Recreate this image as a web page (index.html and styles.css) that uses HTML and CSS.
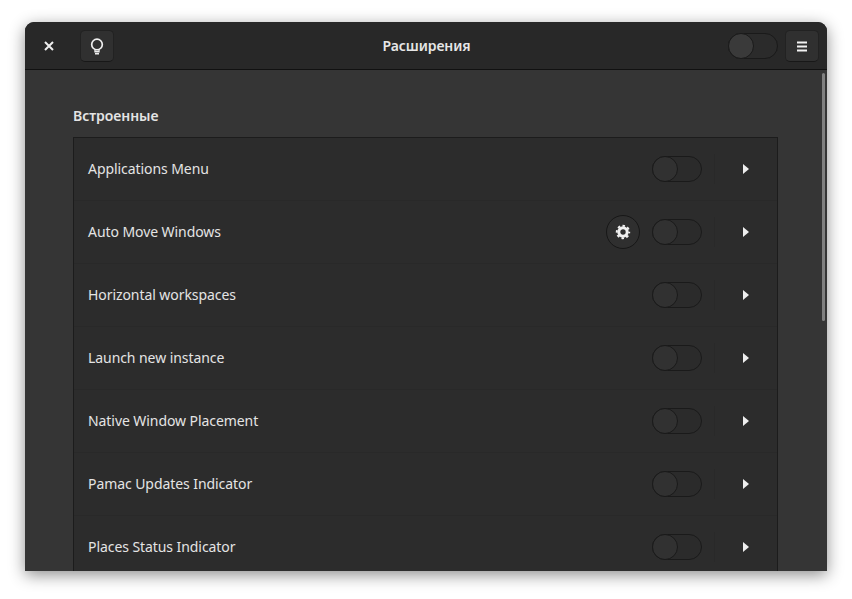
FILE: index.html
```html
<!DOCTYPE html>
<html lang="ru">
<head>
<meta charset="utf-8">
<title>Расширения</title>
<link rel="stylesheet" href="styles.css">
</head>
<body>
<div class="window">
  <header class="titlebar">
    <button class="close" aria-label="Закрыть">
      <svg width="10" height="10" viewBox="0 0 10 10"><path d="M1 1l8 8M9 1l-8 8" stroke="#eee" stroke-width="2" fill="none"/></svg>
    </button>
    <button class="tool" aria-label="Совет">
      <svg width="14" height="17" viewBox="0 0 14 17"><circle cx="7" cy="6.500" r="5.300" stroke="#eee" stroke-width="1.700" fill="none"/><path d="M5 11.500v2.200h4v-2.200" stroke="#eee" stroke-width="1.400" fill="none"/><path d="M5 15.800h4" stroke="#eee" stroke-width="1.600"/></svg>
    </button>
    <h1 class="title">Расширения</h1>
    <span class="switch"><span class="knob"></span></span>
    <button class="tool" aria-label="Меню">
      <svg width="10" height="11" viewBox="0 0 10 11"><path d="M0 1.500h10M0 5.500h10M0 9.500h10" stroke="#f2f2f2" stroke-width="2"/></svg>
    </button>
  </header>
  <main class="content">
    <div class="scrollbar"></div>
    <h2 class="section">Встроенные</h2>
    <div class="list">
      <div class="row"><span class="name">Applications Menu</span><span class="switch"><span class="knob"></span></span><span class="more"><i class="arrow"></i></span></div>
      <div class="row"><span class="name">Auto Move Windows</span>
        <button class="gear" aria-label="Настройки"><svg width="16" height="16" viewBox="0 0 16 16"><circle cx="8" cy="8" r="4.200" fill="none" stroke="#f0f0f0" stroke-width="3"/><circle cx="8" cy="8" r="6.200" fill="none" stroke="#f0f0f0" stroke-width="2" stroke-dasharray="2.500 2.370" stroke-dashoffset="1.250"/></svg></button>
        <span class="switch"><span class="knob"></span></span><span class="more"><i class="arrow"></i></span></div>
      <div class="row"><span class="name">Horizontal workspaces</span><span class="switch"><span class="knob"></span></span><span class="more"><i class="arrow"></i></span></div>
      <div class="row"><span class="name">Launch new instance</span><span class="switch"><span class="knob"></span></span><span class="more"><i class="arrow"></i></span></div>
      <div class="row"><span class="name">Native Window Placement</span><span class="switch"><span class="knob"></span></span><span class="more"><i class="arrow"></i></span></div>
      <div class="row"><span class="name">Pamac Updates Indicator</span><span class="switch"><span class="knob"></span></span><span class="more"><i class="arrow"></i></span></div>
      <div class="row"><span class="name">Places Status Indicator</span><span class="switch"><span class="knob"></span></span><span class="more"><i class="arrow"></i></span></div>
    </div>
  </main>
</div>
</body>
</html>
```

FILE: styles.css
```css
* { box-sizing: border-box; }
html, body { margin: 0; height: 100%; overflow: hidden; background: #fff; }
body { padding: 22px 25px 28px; font-family: "Noto Sans", "Open Sans", sans-serif; font-size: 14px; color: #eee; }
button { padding: 0; font: inherit; color: inherit; }

.window {
  height: 549px;
  display: flex;
  flex-direction: column;
  background: #353535;
  border-radius: 9px 9px 0 0;
  box-shadow: 0 4px 16px rgba(0, 0, 0, .45);
  overflow: hidden;
}

.titlebar {
  flex: none;
  height: 48px;
  display: flex;
  align-items: center;
  padding: 1px 8px 0 8px;
  background: #282828;
  border-bottom: 1px solid #111;
}
.close { width: 32px; height: 32px; margin-right: 15px; border: 0; background: none; display: flex; align-items: center; justify-content: center; }
.tool {
  width: 34px;
  height: 32px;
  display: flex;
  align-items: center;
  justify-content: center;
  background: #303030;
  border: 1px solid #222;
  border-bottom-color: #181818;
  border-radius: 5px;
}
.title { flex: 1; margin: -2px 0 0; padding-left: 11px; text-align: center; font-size: 14px; font-weight: 600; letter-spacing: -.1px; color: #e6e6e6; }
.titlebar .switch { margin-right: 7px; }
.titlebar .knob { background: #3a3a3a; }

.switch {
  flex: none;
  display: block;
  width: 50px;
  height: 26px;
  border: 1px solid #1a1a1a;
  border-radius: 13px;
  background: #2b2b2b;
}
.knob {
  display: block;
  width: 26px;
  height: 26px;
  margin: -1px;
  border-radius: 50%;
  background: #313131;
  border: 1px solid #1a1a1a;
}

.content { position: relative; flex: 1; min-height: 0; padding: 0 48px; overflow: hidden; }
.scrollbar { position: absolute; top: 3px; right: 2px; width: 3px; height: 248px; border-radius: 2px; background: #808080; }
.section { margin: 35px 0 11px; font-size: 14px; line-height: 21px; font-weight: 600; letter-spacing: -.05px; color: #e4e4e4; }

.list { border: 1px solid #1c1c1c; background: #2c2c2c; width: 705px; }
.row {
  height: 63px;
  display: flex;
  align-items: center;
  padding-left: 14px;
  border-bottom: 1px solid #292929;
}
.name { flex: 1; margin-top: -2px; letter-spacing: -.07px; color: #e4e4e4; }
.gear {
  flex: none;
  width: 34px;
  height: 34px;
  margin-right: 12px;
  display: flex;
  align-items: center;
  justify-content: center;
  background: #2f2f2f;
  border: 1px solid #171717;
  border-radius: 50%;
}
.more {
  flex: none;
  width: 63px;
  height: 30px;
  margin-left: 12px;
  display: flex;
  align-items: center;
  justify-content: center;
  border-left: 1px solid #292929;
}
.arrow {
  display: block;
  width: 0;
  height: 0;
  border-left: 6px solid #eee;
  border-top: 5px solid transparent;
  border-bottom: 5px solid transparent;
}
```
